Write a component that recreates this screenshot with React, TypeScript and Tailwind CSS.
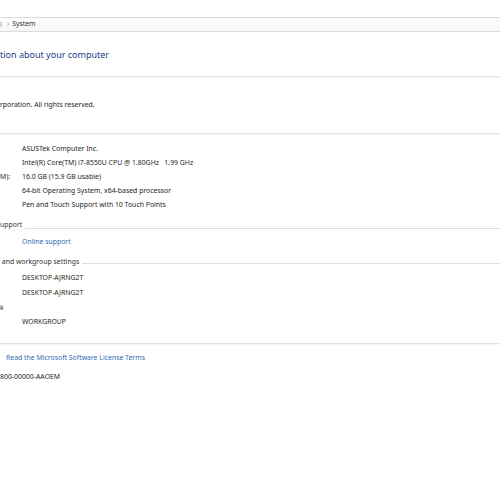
const font = { fontFamily: '"Noto Sans", "Open Sans", sans-serif' };

function Row({ label, value, link }: { label?: string; value: string; link?: boolean }) {
  return (
    <div className="flex h-[14px] items-center whitespace-pre">
      <div className="w-[22px] shrink-0 text-[#333]">{label}</div>
      <div className={link ? 'text-[#2f6cb5]' : 'text-[#262626]'}>{value}</div>
    </div>
  );
}

function Header({ text, lineOffset }: { text: string; lineOffset: string }) {
  return (
    <div className="flex h-[14px] items-center whitespace-pre text-[#333]">
      <span>{text}</span>
      <div className={`ml-[3px] h-0 flex-1 border-t border-[#dedede] ${lineOffset}`} />
    </div>
  );
}

function Divider() {
  return (
    <div>
      <div className="h-px bg-[#e2e2e2]" />
      <div className="h-px bg-[#f4f4f4]" />
    </div>
  );
}

export default function App() {
  return (
    <div className="w-[500px] h-[500px] overflow-hidden bg-white text-[6.9px]" style={font}>
      <div className="pt-[17px]">
        {/* address bar */}
        <div className="flex h-[15px] items-center border-y border-[#dadada] bg-gradient-to-b from-[#fdfdfd] to-[#f6f6f6] text-[#333]">
          <div className="h-[5px] w-[2px] bg-[#cfcfcf]" />
          <span className="ml-[5px] text-[#8a8a8a]">›</span>
          <span className="ml-[3px]">System</span>
        </div>

        {/* title */}
        <div className="flex h-[44px] items-center pt-[2px] text-[9px] text-[#1e3c87] whitespace-nowrap">
          <span>tion about your computer</span>
        </div>

        <Divider />
        <div className="flex h-[55px] items-center whitespace-nowrap text-[#262626]">
          <span>rporation. All rights reserved.</span>
        </div>

        <Divider />
        <div className="pt-[7px]">
          <Row value="ASUSTek Computer Inc." />
          <Row value="Intel(R) Core(TM) i7-8550U CPU @ 1.80GHz   1.99 GHz" />
          <Row label="M):" value="16.0 GB (15.9 GB usable)" />
          <Row value="64-bit Operating System, x64-based processor" />
          <Row value="Pen and Touch Support with 10 Touch Points" />
        </div>

        <div className="pt-[6px]">
          <Header text="upport" lineOffset="mt-[6px]" />
        </div>
        <div className="pt-[3px]">
          <Row value="Online support" link />
        </div>

        <div className="pt-[6px]">
          <Header text=" and workgroup settings" lineOffset="mt-[2px]" />
        </div>
        <div className="pt-[2px] [&>div]:h-[14.7px]">
          <Row value="DESKTOP-AJRNG2T" />
          <Row value="DESKTOP-AJRNG2T" />
          <Row label="k" value="" />
          <Row value="WORKGROUP" />
        </div>

        <div className="pt-[13px]">
          <Divider />
        </div>
        <div className="flex h-[14px] mt-[6px] items-center whitespace-nowrap text-[#2f6cb5]">
          <span className="ml-[6px]">Read the Microsoft Software License Terms</span>
        </div>
        <div className="flex h-[14px] mt-[5px] items-center whitespace-nowrap text-[#262626]">
          <span>800-00000-AAOEM</span>
        </div>
      </div>
    </div>
  );
}
